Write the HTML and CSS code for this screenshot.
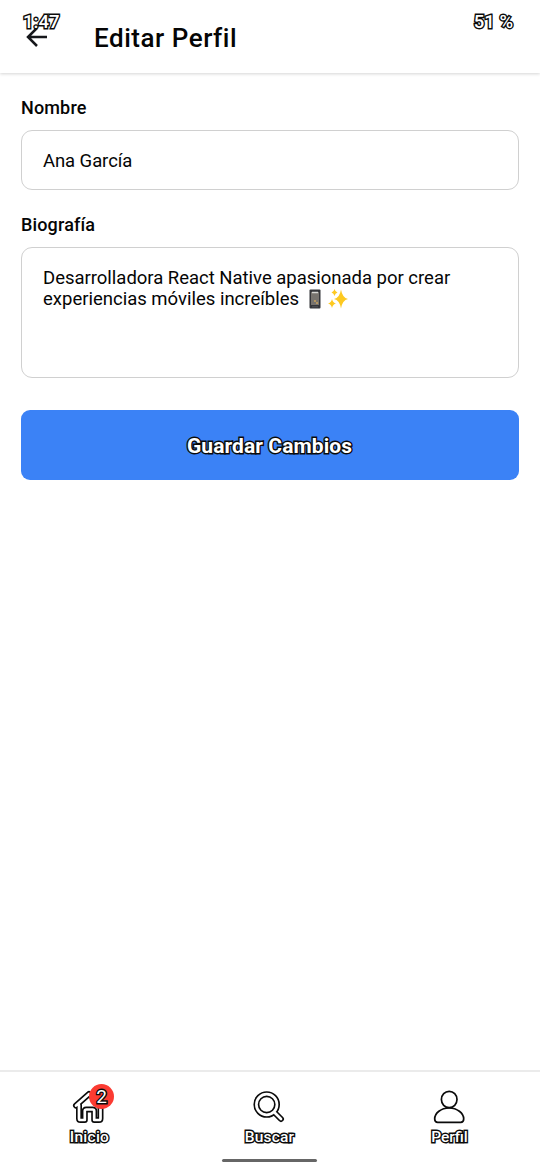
FILE: index.html
```html
<!DOCTYPE html>
<html lang="es">
<head>
<meta charset="utf-8">
<title>Editar Perfil</title>
<link rel="stylesheet" href="styles.css">
</head>
<body>
<div class="screen">
  <div class="status"><span class="outlined clock">1:47</span><span class="outlined battery">51 %</span></div>
  <header class="header">
    <svg class="back" viewBox="0 0 22 20" width="22" height="20"><path d="M21 10H2M11 1L2 10l9 9"/></svg>
    <h1 class="title">Editar Perfil</h1>
  </header>
  <main class="form">
    <div class="label">Nombre</div>
    <div class="field name"><span class="line l-name">Ana García</span></div>
    <div class="label label-bio">Biografía</div>
    <div class="field bio">
      <span class="line l-one">Desarrolladora React Native apasionada por crear</span>
      <span class="bio-row"><span class="line l-two">experiencias móviles increíbles</span>
        <svg class="phone" viewBox="0 0 12 20" width="12" height="20"><rect x=".5" y=".5" width="11" height="19" rx="1" fill="#35363a"/><rect x="2" y="3" width="8" height="13" fill="#77736e"/><path d="M3 3.5h6" stroke="#d6d6d3" stroke-width="1.5"/><path d="M5 12h2M7 14h2" stroke="#c7a35c" stroke-width="1.5"/><path d="M3 17.8h6" stroke="#54565b"/></svg>
        <svg class="sparkles" viewBox="0 0 20 20" width="20" height="20"><path fill="#fdc921" d="M13 .5q1.300 8.200 7 9.500-5.700 1.300-7 9.500-1.300-8.200-7-9.500 5.700-1.300 7-9.500ZM4 10q.9 3.600 4 4.500-3.100.9-4 4.500-.9-3.600-4-4.500 3.100-.9 4-4.500ZM6.500 0q.7 2.900 3 3.500-2.300.6-3 3.500-.7-2.900-3-3.500 2.300-.6 3-3.500Z"/></svg>
      </span>
    </div>
    <div class="save"><span class="outlined save-text">Guardar Cambios</span></div>
  </main>
  <nav class="tabs">
    <div class="tab">
      <div class="icon-wrap">
        <svg class="icon" viewBox="0 0 34 34" width="34" height="34"><path class="edge" d="M4 15.500L17 4 30 15.500M7 15v13.500q0 1.500 1.500 1.500h4.300V21q0-1.500 1.500-1.500h6.400q1.500 0 1.500 1.500v9h4.800q1.500 0 1.500-1.500V13"/><path class="core" d="M4 15.500L17 4 30 15.500M7 15v13.500q0 1.500 1.500 1.500h4.300V21q0-1.500 1.500-1.500h6.400q1.500 0 1.500 1.500v9h4.800q1.500 0 1.500-1.500V13"/></svg>
        <span class="badge"><span class="outlined">2</span></span>
      </div>
      <span class="outlined tab-label t-home">Inicio</span>
    </div>
    <div class="tab">
      <div class="icon-wrap"><svg class="icon" viewBox="0 0 34 34" width="34" height="34"><path class="edge" d="M25 14.500a10.300 10.300 0 1 1-20.600 0 10.300 10.300 0 1 1 20.600 0M22 22l7 7"/><path class="core" d="M25 14.500a10.300 10.300 0 1 1-20.600 0 10.300 10.300 0 1 1 20.600 0M22 22l7 7"/></svg></div>
      <span class="outlined tab-label t-search">Buscar</span>
    </div>
    <div class="tab">
      <div class="icon-wrap"><svg class="icon person" viewBox="0 0 34 34" width="34" height="34"><ellipse cx="17.200" cy="9.500" rx="7.800" ry="8.200"/><path d="M17.200 18C9 18 2.700 23 2.700 29q0 3.300 3 3.300h23q3 0 3-3.300C31.700 23 25 18 17.200 18Z"/></svg></div>
      <span class="outlined tab-label t-profile">Perfil</span>
    </div>
  </nav>
  <div class="home-bar"></div>
</div>
</body>
</html>
```
FILE: styles.css
```css
* { box-sizing: border-box; }
body { margin: 0; background: #fff; font-family: Roboto, sans-serif; color: #050505; }
.screen { position: relative; width: 540px; height: 1170px; display: flex; flex-direction: column; overflow: hidden; background: #fff; }
.status { position: absolute; z-index: 2; top: 12px; left: 23px; right: 27px; display: flex; justify-content: space-between; font-size: 18.500px; line-height: 21px; font-weight: 500; }
.outlined { color: #fff; -webkit-text-stroke: 2.8px #0b0b0b; paint-order: stroke fill; white-space: nowrap; }
.header { flex: none; height: 73px; display: flex; align-items: center; padding: 0 0 0 26px; box-shadow: 0 1px 3px rgba(0,0,0,.17); }
.back { fill: none; stroke: #16171b; stroke-width: 2.5; }
.title { margin: 2px 0 0 46px; font-size: 26px; line-height: 32px; font-weight: 500; letter-spacing: .53px; white-space: nowrap; }
.form { flex: 1; padding: 23px 21px 0; }
.label { font-size: 18px; font-weight: 500; line-height: 24px; height: 34px; letter-spacing: .15px; }
.label-bio { margin-top: 23px; }
.field { border: 1px solid #d0d0d0; border-radius: 11px; font-size: 18.500px; line-height: 21px; }
.name { height: 60px; padding: 20px 21px; }
.l-name { letter-spacing: -.08px; }
.bio { height: 131px; padding: 20px 21px; }
.line { white-space: nowrap; }
.l-one { display: block; letter-spacing: -.015px; }
.bio-row { display: flex; height: 21px; align-items: center; }
.phone { margin: -2px 0 0 10px; }
.sparkles { margin: -2px 0 0 7px; }
.save { height: 70px; margin-top: 32px; border-radius: 9px; background: #3b82f6; display: flex; align-items: center; justify-content: center; }
.save-text { font-size: 21px; font-weight: 700; padding: 2px 1px 0 0; letter-spacing: .08px; }
.tabs { flex: none; height: 100px; padding-top: 18px; border-top: 2px solid #ebebeb; display: grid; grid-template-columns: repeat(3, 1fr); }
.tab { display: flex; flex-direction: column; align-items: center; padding-right: 2px; }
.icon-wrap { position: relative; width: 34px; height: 34px; }
.icon { display: block; fill: none; stroke-linecap: round; stroke-linejoin: round; overflow: visible; }
.edge { stroke: #0b0b0b; stroke-width: 6; }
.core { stroke: #fff; stroke-width: 2.7; }
.person { stroke: #0b0b0b; stroke-width: 1.7; }
.badge { position: absolute; left: 17px; top: -6px; width: 25px; height: 25px; border-radius: 50%; background: #fb3b32; display: flex; align-items: center; justify-content: center; font-size: 19px; line-height: 22px; }
.tab-label { font-size: 15.500px; line-height: 18px; font-weight: 500; margin: 4px 0 0 1px; }
.t-home { letter-spacing: .25px; }
.t-search { letter-spacing: .2px; }
.home-bar { position: absolute; left: 222px; top: 1159px; width: 95px; height: 3px; border-radius: 2px; background: #666; }
```
